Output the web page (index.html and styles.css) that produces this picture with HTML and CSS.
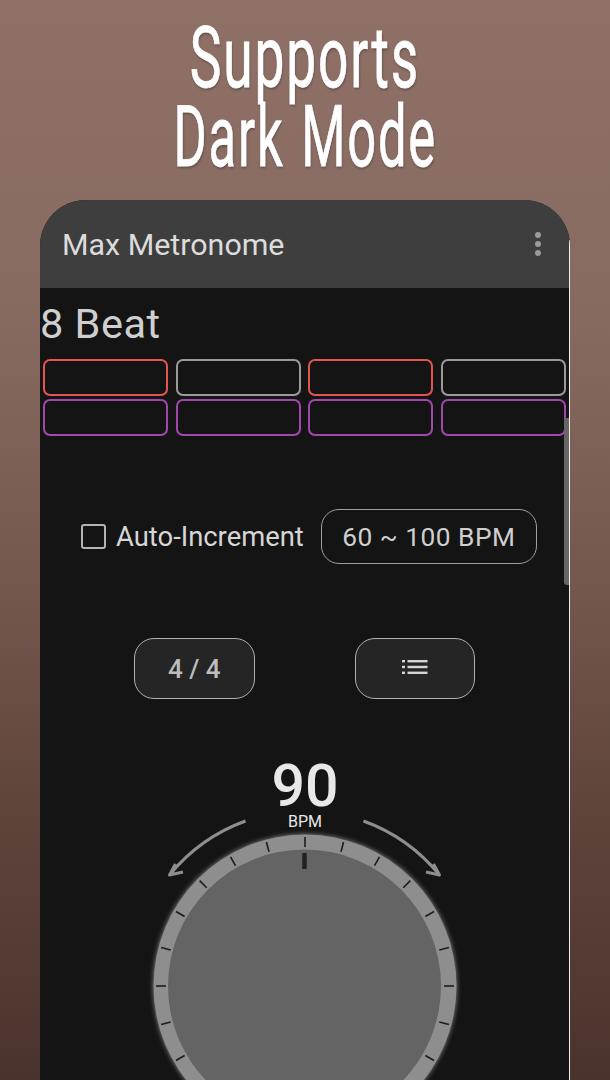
FILE: index.html
```html
<!DOCTYPE html>
<html lang="en">
<head>
    <meta charset="UTF-8">
    <meta name="viewport" content="width=device-width, initial-scale=1.0">
    <title>Max Metronome</title>
    <link rel="stylesheet" href="styles.css">
</head>
<body>
    <h1 class="headline">
        <span>Supports</span>
        <span class="line-two">Dark Mode</span>
    </h1>
    <main class="phone">
        <header class="appbar">
            <div class="appbar-title">Max Metronome</div>
            <div class="menu-dots"><i></i><i></i><i></i></div>
        </header>
        <section class="content">
            <div class="beat-name">8 Beat</div>
            <div class="beat-grid">
                <div class="beat accent"></div>
                <div class="beat"></div>
                <div class="beat accent"></div>
                <div class="beat"></div>
                <div class="beat sub"></div>
                <div class="beat sub"></div>
                <div class="beat sub"></div>
                <div class="beat sub"></div>
            </div>
            <div class="auto-row">
                <span class="checkbox"></span>
                <span class="auto-label">Auto-Increment</span>
                <button class="range-btn">60 ~ 100 BPM</button>
            </div>
            <div class="tool-row">
                <button class="tool-btn">4 / 4</button>
                <button class="tool-btn">
                    <svg width="26" height="16" viewBox="0 0 26 16" fill="#d4d4d4">
                        <rect x="0" y="1" width="3" height="2.4"/>
                        <rect x="5.5" y="1" width="20" height="2.4"/>
                        <rect x="0" y="6.8" width="3" height="2.4"/>
                        <rect x="5.5" y="6.8" width="20" height="2.4"/>
                        <rect x="0" y="12.6" width="3" height="2.4"/>
                        <rect x="5.5" y="12.6" width="20" height="2.4"/>
                    </svg>
                </button>
            </div>
            <div class="dial">
                <div class="tempo">
                    <div class="tempo-value">90</div>
                    <div class="tempo-unit">BPM</div>
                </div>
                <svg class="dial-svg" width="340" height="340" viewBox="-170 -225 340 340">
                    <defs>
                        <filter id="glow" x="-10%" y="-10%" width="120%" height="120%">
                            <feGaussianBlur stdDeviation="2.5"/>
                        </filter>
                    </defs>
                    <path class="arrow" d="M-59.5 -165 A175 175 0 0 0 -135.5 -111 M-129.5 -122 L-135.5 -111 L-122 -114"/>
                    <path class="arrow" d="M58.5 -165 A175 175 0 0 1 134.5 -111 M128.5 -122 L134.5 -111 L121 -114"/>
                    <circle r="151.5" fill="#8e8e8e" filter="url(#glow)"/>
                    <circle r="151.5" fill="#8e8e8e"/>
                    <circle cx="-.5" r="136.5" fill="#646464"/>
                    <g class="ticks">
                        <line y1="-149" y2="-139"/>
                        <line y1="-149" y2="-139" transform="rotate(15)"/>
                        <line y1="-149" y2="-139" transform="rotate(30)"/>
                        <line y1="-149" y2="-139" transform="rotate(45)"/>
                        <line y1="-149" y2="-139" transform="rotate(60)"/>
                        <line y1="-149" y2="-139" transform="rotate(75)"/>
                        <line y1="-149" y2="-139" transform="rotate(90)"/>
                        <line y1="-149" y2="-139" transform="rotate(105)"/>
                        <line y1="-149" y2="-139" transform="rotate(120)"/>
                        <line y1="-149" y2="-139" transform="rotate(135)"/>
                        <line y1="-149" y2="-139" transform="rotate(150)"/>
                        <line y1="-149" y2="-139" transform="rotate(165)"/>
                        <line y1="-149" y2="-139" transform="rotate(180)"/>
                        <line y1="-149" y2="-139" transform="rotate(195)"/>
                        <line y1="-149" y2="-139" transform="rotate(210)"/>
                        <line y1="-149" y2="-139" transform="rotate(225)"/>
                        <line y1="-149" y2="-139" transform="rotate(240)"/>
                        <line y1="-149" y2="-139" transform="rotate(255)"/>
                        <line y1="-149" y2="-139" transform="rotate(270)"/>
                        <line y1="-149" y2="-139" transform="rotate(285)"/>
                        <line y1="-149" y2="-139" transform="rotate(300)"/>
                        <line y1="-149" y2="-139" transform="rotate(315)"/>
                        <line y1="-149" y2="-139" transform="rotate(330)"/>
                        <line y1="-149" y2="-139" transform="rotate(345)"/>
                    </g>
                    <line class="pointer" x1="-.5" x2="-.5" y1="-133" y2="-117"/>
                </svg>
            </div>
            <div class="scrollbar"></div>
        </section>
    </main>
</body>
</html>
```
FILE: styles.css
```css
html, body {
    margin: 0;
    padding: 0;
    width: 610px;
    height: 1080px;
    overflow: hidden;
    font-family: Roboto, sans-serif;
}

body {
    background: linear-gradient(to bottom, #8f7067 0%, #866a60 30%, #73574d 55%, #5f443c 75%, #4b332d 100%);
}

.headline {
    margin: 0;
    height: 200px;
    box-sizing: border-box;
    padding-top: 18px;
    display: flex;
    flex-direction: column;
    align-items: center;
    font-weight: 400;
    font-size: 86px;
    line-height: 79px;
    letter-spacing: 3px;
    word-spacing: 4px;
    color: #fff;
    -webkit-text-stroke: .8px #fff;
    text-shadow: 1px 2px 3px rgba(0, 0, 0, .3);
}

.headline span {
    display: block;
    white-space: nowrap;
    transform: scaleX(.62);
}

.headline .line-two {
    transform: scaleX(.59);
}

.phone {
    position: relative;
    width: 530px;
    height: 880px;
    margin-left: 40px;
    border-radius: 46px 46px 0 0;
    overflow: hidden;
    background: #141414;
}

/* thin light edge on the right of the device */
.phone::after {
    content: "";
    position: absolute;
    top: 40px;
    bottom: 0;
    right: 0;
    width: 1px;
    background: #eee;
}

.appbar {
    height: 88px;
    box-sizing: border-box;
    padding: 0 29px 0 22px;
    display: flex;
    align-items: center;
    justify-content: space-between;
    background: #3e3e3e;
}

.appbar-title {
    font-size: 30.4px;
    color: #dcdcdc;
}

.menu-dots {
    display: flex;
    flex-direction: column;
    gap: 3px;
}

.menu-dots i {
    width: 6px;
    height: 6px;
    border-radius: 50%;
    background: #9a9a9a;
}

.content {
    position: relative;
    height: 792px;
}

.beat-name {
    font-size: 41.5px;
    line-height: 48px;
    padding-top: 12px;
    color: #cfcfcf;
    letter-spacing: .5px;
}

.beat-grid {
    display: grid;
    grid-template-columns: repeat(4, 125px);
    grid-auto-rows: 37px;
    column-gap: 7.5px;
    row-gap: 3px;
    margin: 11px 0 0 3px;
}

.beat {
    box-sizing: border-box;
    border: 2.4px solid #9a9a9a;
    border-radius: 7px;
}

.beat.accent {
    border-color: #e2564f;
}

.beat.sub {
    border-color: #a347ad;
}

.auto-row {
    display: flex;
    align-items: center;
    margin: 73px 0 0 41px;
}

.checkbox {
    width: 25px;
    height: 25px;
    box-sizing: border-box;
    border: 2.5px solid #b4b4b4;
    border-radius: 3px;
}

.auto-label {
    margin-left: 10px;
    font-size: 27.4px;
    color: #d6d6d6;
}

button {
    font-family: inherit;
    box-sizing: border-box;
    color: #cfcfcf;
}

.range-btn {
    width: 216px;
    height: 55px;
    margin-left: 17px;
    background: transparent;
    border: 1.5px solid #a0a0a0;
    border-radius: 18px;
    font-size: 26.3px;
    letter-spacing: .5px;
}

.tool-row {
    display: flex;
    gap: 100px;
    margin: 74px 0 0 94px;
}

.tool-btn {
    display: flex;
    align-items: center;
    justify-content: center;
    width: 120.5px;
    height: 61px;
    padding-top: 2px;
    background: #252525;
    border: 1.5px solid #b0b0b0;
    border-radius: 20px;
    font-size: 26px;
    font-weight: 500;
    color: #bdbdbd;
}

.tool-btn svg {
    margin-top: -4px;
}

.dial {
    position: relative;
    width: 340px;
    margin: 62px 0 0 95px;
}

.dial-svg {
    display: block;
}

.tempo {
    position: absolute;
    top: -3px;
    left: 0;
    right: 0;
    text-align: center;
    color: #e8e8e8;
}

.tempo-value {
    font-size: 59px;
    line-height: 55px;
    font-weight: 500;
}

.tempo-unit {
    font-size: 16px;
    line-height: 16px;
    margin-top: 1px;
}

.arrow {
    fill: none;
    stroke: #8e8e8e;
    stroke-width: 3;
    stroke-linejoin: round;
}

.ticks line {
    stroke: #1c1c1c;
    stroke-width: 1.6;
}

.pointer {
    stroke: #222;
    stroke-width: 4.5;
}

.scrollbar {
    position: absolute;
    top: 130px;
    right: 1px;
    width: 5px;
    height: 167px;
    border-radius: 3px 0 0 3px;
    background: #666;
}
```
